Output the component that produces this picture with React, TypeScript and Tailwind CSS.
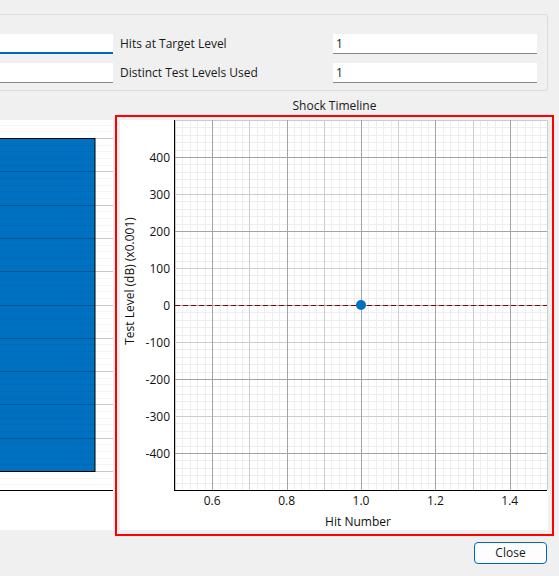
import { Fragment } from "react";

const X0 = 55
const X1 = 427
const PH = 370
const sx = (v: number) => X0 + (v - 0.5) * (X1 - X0)
const sy = (v: number) => ((500 - v) / 1000) * PH
const px = (n: number) => Math.round(n) + 0.5

function Field({ value = '', focused = false, w }: { value?: string; focused?: boolean; w: string }) {
  return (
    <div
      className={`${w} h-[20px] shrink-0 bg-white px-[3px] text-[12px] leading-[20px] text-[#1a1a1a] ${
        focused ? 'border-b-2 border-[#0067c0]' : 'border-b border-[#868686]'
      }`}
    >
      {value}
    </div>
  )
}

function HistogramStub() {
  const lines = []
  for (let k = -2; k <= 53; k++) {
    const y = 18 + k * (333 / 50)
    if (y < 0 || y > 369) continue
    const major = k % 5 === 0
    lines.push(
      <line key={k} x1={0} x2={113} y1={px(y)} y2={px(y)} stroke="#000" strokeOpacity={major ? 0.22 : 0.045} />
    )
  }
  return (
    <svg width={113} height={410} className="block">
      <rect x={0} y={0} width={113} height={410} fill="#fff" />
      <rect x={-2} y={18.5} width={97} height={333} fill="#0070c0" stroke="#000" />
      {lines}
      <line x1={0} x2={113} y1={370.5} y2={370.5} stroke="#000" />
    </svg>
  )
}

function ShockTimeline() {
  const vx = []
  for (let i = 0; i <= 50; i++) {
    const x = px(sx(0.5 + i * 0.02))
    const color = i % 10 === 5 ? '#a4a4a4' : i % 10 === 0 ? '#cdcdcd' : '#eeeeee'
    vx.push({ x, color, rank: i % 5 === 0 ? (i % 10 === 5 ? 2 : 1) : 0 })
  }
  const hy = []
  for (let j = 0; j <= 50; j++) {
    const v = -500 + j * 20
    const y = px(sy(v))
    const color = v % 200 === 0 ? '#a4a4a4' : v % 100 === 0 ? '#cdcdcd' : '#eeeeee'
    hy.push({ y, color, rank: v % 100 === 0 ? (v % 200 === 0 ? 2 : 1) : 0 })
  }
  const order = [0, 1, 2]
  const yTicks = [400, 300, 200, 100, 0, -100, -200, -300, -400]
  const xTicks = [0.6, 0.8, 1.0, 1.2, 1.4]

  return (
    <svg width={428} height={410} className="block">
      <rect x={0} y={0} width={428} height={410} fill="#fff" />
      {order.map(r => (
        <Fragment key={r}>
          {vx.filter(l => l.rank === r).map((l, i) => (
            <line key={'v' + i} x1={l.x} x2={l.x} y1={0} y2={PH} stroke={l.color} />
          ))}
          {hy.filter(l => l.rank === r).map((l, i) => (
            <line key={'h' + i} x1={X0} x2={X1} y1={l.y} y2={l.y} stroke={l.color} />
          ))}
        </Fragment>
      ))}
      <line x1={X0} x2={X1} y1={185.5} y2={185.5} stroke="#8b0000" strokeDasharray="5 3" />
      <circle cx={sx(1.0)} cy={185} r={5} fill="#0070c0" />
      <line x1={54.5} x2={54.5} y1={0} y2={371} stroke="#000" />
      <line x1={54} x2={X1} y1={370.5} y2={370.5} stroke="#000" />
      {yTicks.map(t => (
        <text key={t} x={50} y={sy(t) + 4.5} textAnchor="end" fontSize={12} fill="#111">
          {t}
        </text>
      ))}
      {xTicks.map(t => (
        <text key={t} x={sx(t)} y={384.5} textAnchor="middle" fontSize={12} fill="#111">
          {t.toFixed(1)}
        </text>
      ))}
      <text x={238} y={406} textAnchor="middle" fontSize={12} fill="#111">Hit Number</text>
      <text x={0} y={0} transform="translate(13.5 161) rotate(-90)" textAnchor="middle" fontSize={12} fill="#111">
        Test Level (dB) (x0.001)
      </text>
    </svg>
  )
}

export default function App() {
  return (
    <div className="w-[559px] h-[576px] overflow-hidden bg-[#f0f0f0] font-['Open_Sans',sans-serif] text-[12px] text-[#1a1a1a]">
      <div className="pt-[14px]">
        <div className="w-[548px] h-[77px] border-t border-r border-b border-[#dcdcdc] rounded-tr-[3px] rounded-br-[3px] pt-[18px] flex flex-col gap-[8px]">
          <div className="flex items-center">
            <Field w="w-[113px]" focused />
            <span className="w-[220px] shrink-0 pl-[7px] pt-[1px] leading-[20px]">Hits at Target Level</span>
            <Field w="w-[204px]" value="1" />
          </div>
          <div className="flex items-center">
            <Field w="w-[113px]" />
            <span className="w-[220px] shrink-0 pl-[7px] pt-[1px] leading-[20px]">Distinct Test Levels Used</span>
            <Field w="w-[204px]" value="1" />
          </div>
        </div>
      </div>

      <div className="ml-[115px] w-[439px] pt-[7px] pb-[1px] leading-[16px] text-center">Shock Timeline</div>

      <div className="flex items-start">
        <div className="mt-[5px]">
          <HistogramStub />
        </div>
        <div className="ml-[2px] w-[439px] h-[421px] border-2 border-[#ff0000] pt-[3px] pl-[3px] pr-[4px] pb-[4px]">
          <ShockTimeline />
        </div>
      </div>

      <div className="flex justify-end pr-[12px] pt-[6px]">
        <button className="w-[73px] h-[22px] rounded-[4px] border border-[#0067c0] bg-[#fdfdfd] text-[12px] leading-[20px] text-[#1a1a1a]">
          Close
        </button>
      </div>
    </div>
  )
}
